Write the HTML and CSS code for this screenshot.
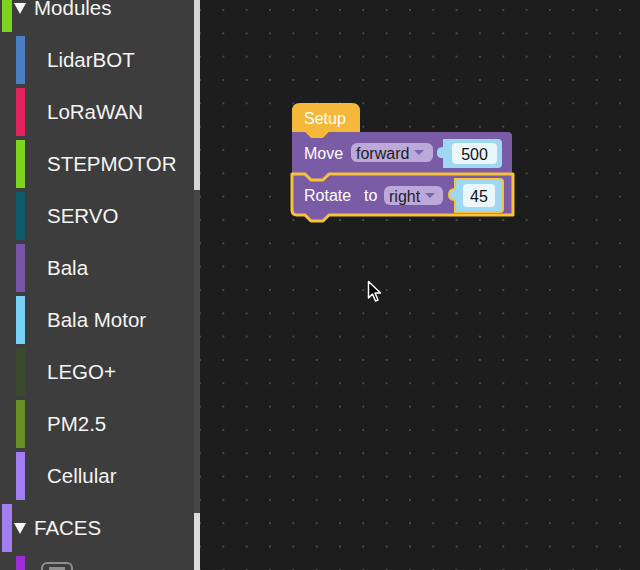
FILE: index.html
```html
<!DOCTYPE html>
<html>
<head>
<meta charset="utf-8">
<link rel="stylesheet" href="styles.css">
</head>
<body>
<div class="app">
  <div class="sidebar">
    <div class="list">
      <div class="row head"><span class="bar c-modules"></span><span class="tri"></span><span class="label">Modules</span></div>
      <div class="row item"><span class="bar c-lidar"></span><span class="label">LidarBOT</span></div>
      <div class="row item"><span class="bar c-lora"></span><span class="label">LoRaWAN</span></div>
      <div class="row item"><span class="bar c-step"></span><span class="label">STEPMOTOR</span></div>
      <div class="row item"><span class="bar c-servo"></span><span class="label">SERVO</span></div>
      <div class="row item"><span class="bar c-bala"></span><span class="label">Bala</span></div>
      <div class="row item"><span class="bar c-balam"></span><span class="label">Bala Motor</span></div>
      <div class="row item"><span class="bar c-lego"></span><span class="label">LEGO+</span></div>
      <div class="row item"><span class="bar c-pm"></span><span class="label">PM2.5</span></div>
      <div class="row item"><span class="bar c-cell"></span><span class="label">Cellular</span></div>
      <div class="row head"><span class="bar c-faces"></span><span class="tri"></span><span class="label">FACES</span></div>
      <div class="row item"><span class="bar c-face1"></span><span class="icon"><span class="icon-line"></span></span></div>
    </div>
  </div>
  <div class="scroll"><div class="thumb thumb-top"></div><div class="track"></div><div class="thumb thumb-bottom"></div></div>
  <div class="canvas">
    <svg class="blocks" width="440" height="570" viewBox="200 0 440 570" xmlns="http://www.w3.org/2000/svg">
      <!-- Move block -->
      <path d="M292,132 H305 L311,138 H323 L329,132 H508 Q512,132 512,136 V174 H329 L323,180 H311 L305,174 H292 Z" fill="#7a5ba6"/>
      <!-- Setup hat -->
      <path d="M292,132 V111 Q292,103 300,103 H352 Q360,103 360,111 V132 H329 L323,138 H311 L305,132 Z" fill="#f6b83a"/>
      <text x="304" y="118" class="btxt">Setup</text>
      <text x="304" y="153" class="btxt">Move</text>
      <rect x="351" y="143" width="82" height="19" rx="6" fill="#bca9da"/>
      <text x="356" y="153" class="dtxt">forward</text>
      <path d="M414,150 H424 L419,155 Z" fill="#7d68a8"/>
      <path d="M443,139 H498 Q502,139 502,143 V164 Q502,168 498,168 H443 V158 C438,158 437,156 437,153 S438,147 443,147 Z" fill="#9fd8f2"/>
      <rect x="452" y="143" width="45" height="21" rx="4" fill="#eaf7fd"/>
      <text x="474.5" y="154" class="vtxt">500</text>
      <!-- Rotate block (selected) -->
      <path d="M292,174 H305 L311,180 H323 L329,174 H513 V215 H329 L323,221 H311 L305,215 H297 Q292,215 292,210 Z" fill="#7a5ba6" stroke="#f8c23a" stroke-width="3" stroke-linejoin="round"/>
      <text x="304" y="195" class="btxt">Rotate</text>
      <text x="364" y="195" class="btxt">to</text>
      <rect x="384" y="186" width="59" height="19" rx="6" fill="#bca9da"/>
      <text x="389" y="196" class="dtxt">right</text>
      <path d="M425,193 H435 L430,198 Z" fill="#7d68a8"/>
      <path d="M455,179 H500 Q503,179 503,182 V209 Q503,212 500,212 H455 V200 C450,200 449,198 449,195 S450,189 455,189 Z" fill="#9fd8f2" stroke="#f8c23a" stroke-width="2"/>
      <rect x="463" y="184" width="32" height="23" rx="4" fill="#eaf7fd"/>
      <text x="479" y="196" class="vtxt">45</text>
    </svg>
    <svg class="cursor" width="16" height="24" viewBox="0 0 16 24" xmlns="http://www.w3.org/2000/svg">
      <path d="M1.5,1.5 V18 L5.5,14 L8.5,21 L11,20 L8,13 H13.5 Z" fill="#000" stroke="#fff" stroke-width="1.5" stroke-linejoin="round"/>
    </svg>
  </div>
</div>
</body>
</html>
```

FILE: styles.css
```css
* { box-sizing: border-box; }
html, body { margin: 0; padding: 0; }
body {
  width: 640px;
  height: 570px;
  overflow: hidden;
  font-family: "Liberation Sans", Arial, sans-serif;
  background: #1d1d1d;
}
.app {
  display: flex;
  width: 640px;
  height: 570px;
}
.sidebar {
  width: 194px;
  height: 570px;
  background: #3d3d3d;
  overflow: hidden;
  flex: none;
}
.list {
  display: flex;
  flex-direction: column;
  gap: 4px;
  margin-top: -16px;
}
.row {
  height: 48px;
  display: flex;
  align-items: center;
  flex: none;
}
.bar {
  align-self: stretch;
  flex: none;
}
.head .bar { width: 10px; margin-left: 2px; }
.item .bar { width: 9px; margin-left: 16px; }
.tri {
  width: 0;
  height: 0;
  margin-left: 2px;
  border-left: 6px solid transparent;
  border-right: 6px solid transparent;
  border-top: 11px solid #f4f4f4;
}
.label {
  color: #f4f4f4;
  font-size: 20.5px;
  line-height: 24px;
}
.head .label { margin-left: 8px; }
.item .label { margin-left: 22px; }
.c-modules { background: #7ed321; }
.c-lidar { background: #4a7fc4; }
.c-lora { background: #e0245e; }
.c-step { background: #7ed321; }
.c-servo { background: #0f5a6d; }
.c-bala { background: #7857a8; }
.c-balam { background: #78d2f5; }
.c-lego { background: #3b4a2f; }
.c-pm { background: #6a8f24; }
.c-cell { background: #a27ef2; }
.c-faces { background: #a27ef2; }
.c-face1 { background: #9b2fd3; }
.icon {
  align-self: flex-start;
  margin-top: 6px;
  margin-left: 16px;
  width: 32px;
  height: 22px;
  border: 2px solid #8e8e8e;
  border-radius: 6px;
  display: flex;
  justify-content: center;
  padding-top: 3px;
}
.icon-line {
  width: 16px;
  height: 3px;
  background: #8e8e8e;
}
.scroll {
  width: 6px;
  height: 570px;
  flex: none;
  display: flex;
  flex-direction: column;
  background: #464646;
}
.thumb { background: #d6d6d6; flex: none; }
.thumb-top { height: 190px; }
.track { flex: 1; }
.thumb-bottom { height: 57px; background: #dcdcdc; }
.canvas {
  flex: 1;
  height: 570px;
  position: relative;
  background-color: #1d1d1d;
  background-image: radial-gradient(circle, #4a4a4a 0.8px, transparent 1.2px);
  background-size: 23.33px 23.33px;
  background-position: -11.67px -1.67px;
}
.blocks {
  position: absolute;
  left: 0;
  top: 0;
}
.btxt {
  font-family: "Liberation Sans", Arial, sans-serif;
  font-size: 16px;
  fill: #ffffff;
  dominant-baseline: central;
}
.dtxt {
  font-family: "Liberation Sans", Arial, sans-serif;
  font-size: 16px;
  fill: #1e1e1e;
  dominant-baseline: central;
}
.vtxt {
  font-family: "Liberation Sans", Arial, sans-serif;
  font-size: 16px;
  fill: #111111;
  text-anchor: middle;
  dominant-baseline: central;
}
.cursor {
  position: absolute;
  left: 167px;
  top: 280px;
}
```
